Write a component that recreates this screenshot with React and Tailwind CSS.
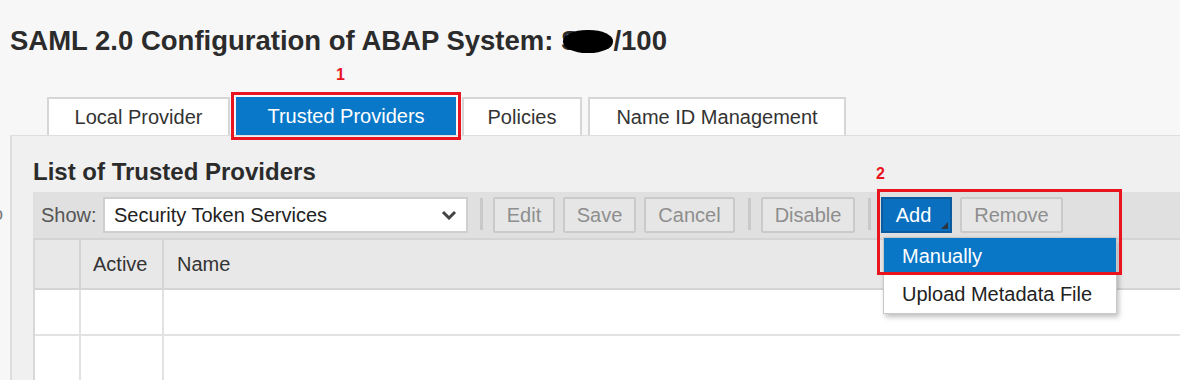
import React from "react";

const tabs = [
  { label: "Local Provider", w: "w-[183px]" },
  { label: "Trusted Providers", w: "w-[220px]", active: true },
  { label: "Policies", w: "w-[120px]" },
  { label: "Name ID Management", w: "w-[258px]" },
];

const Separator = () => <div className="w-[3px] h-[32px] bg-[#c9c9c9] mt-[1px]" />;

const ToolButton = ({ children, w }) => (
  <div
    className={`${w} h-[36px] flex items-center justify-center rounded-[2px] border-2 border-[#cacaca] bg-[#e6e6e6] text-[20px] text-[#8e8e8e]`}
  >
    {children}
  </div>
);

const App = () => {
  return (
    <div
      className="relative h-[380px] w-[1180px] overflow-hidden bg-[#f7f7f7] text-[#333]"
      style={{ fontFamily: '"Liberation Sans", Arial, sans-serif' }}
    >
      {/* clipped glyph at the left edge */}
      <span className="absolute left-[-7px] top-[201px] text-[18px] text-[#777]">o</span>

      <h1 className="pl-[10px] pt-[25px] text-[27.5px] leading-[32px] font-bold text-[#2b2b2b] whitespace-nowrap flex items-center">
        <span>SAML 2.0 Configuration of ABAP System: S</span>
        <span className="inline-block w-[50px] h-[23px] -ml-[16px] rounded-[48%] bg-black" />
        <span>/100</span>
      </h1>

      {/* tabs */}
      <div className="flex mt-[40px] ml-[47px] gap-[6px]">
        {tabs.map((t) => (
          <div
            key={t.label}
            className={`relative ${t.w} h-[38px] flex items-center justify-center text-[20px] ${
              t.active
                ? "bg-[#0a78c8] text-white outline-[3px] outline-offset-[2px] outline-[#e8141f]"
                : "bg-white text-[#333] border-2 border-b-0 border-[#d6d6d6]"
            }`}
          >
            {t.active && (
              <span className="absolute left-[100px] top-[-30px] text-[16px] leading-none font-bold text-[#e8141f]">
                1
              </span>
            )}
            {t.label}
          </div>
        ))}
      </div>

      {/* panel */}
      <div className="ml-[10px] border-l-2 border-t border-[#dedede] bg-[#f0f0f0] pl-[21px] h-[260px]">
        <h2 className="mt-[22px] text-[24px] leading-[28px] font-bold text-[#2b2b2b]">
          List of Trusted Providers
        </h2>

        {/* toolbar */}
        <div className="mt-[6px] h-[48px] bg-[#e0e0e0] border-b-2 border-[#d4d4d4] flex items-start pt-[5px] pl-[8px]">
          <span className="text-[20px] text-[#555] leading-[36px] w-[62px]">Show:</span>
          <div className="w-[365px] h-[36px] bg-white border-2 border-[#cfcfcf] flex items-center justify-between pl-[9px] pr-[9px]">
            <span className="text-[20px] text-[#222]">Security Token Services</span>
            <svg width="16" height="10" viewBox="0 0 16 10">
              <path d="M2 2 L8 8 L14 2" fill="none" stroke="#444" strokeWidth="3" />
            </svg>
          </div>
          <div className="ml-[12px] mr-[10px]">
            <Separator />
          </div>
          <div className="flex gap-[8px]">
            <ToolButton w="w-[62px]">Edit</ToolButton>
            <ToolButton w="w-[73px]">Save</ToolButton>
            <ToolButton w="w-[91px]">Cancel</ToolButton>
          </div>
          <div className="ml-[13px] mr-[10px]">
            <Separator />
          </div>
          <ToolButton w="w-[94px]">Disable</ToolButton>
          <div className="ml-[13px] mr-[10px]">
            <Separator />
          </div>
          <div className="relative">
            <div className="relative w-[71px] h-[36px] flex items-center justify-center pr-[6px] bg-[#0b6fbf] border-2 border-[#0a5c9e] text-[20px] text-white">
              Add
              <svg className="absolute right-[2px] bottom-[2px]" width="7" height="7" viewBox="0 0 7 7">
                <polygon points="7,0 7,7 0,7" fill="#2b3440" />
              </svg>
            </div>
            <span className="absolute left-[-5px] top-[-31px] text-[16px] leading-none font-bold text-[#e8141f]">
              2
            </span>
            {/* dropdown */}
            <div className="absolute left-[2px] top-[40px] w-[234px] bg-white border border-[#c8c8c8] shadow-[2px_3px_5px_rgba(0,0,0,0.25)] z-10">
              <div className="h-[36px] bg-[#0a76c6] text-white text-[20px] flex items-center pl-[18px]">
                Manually
              </div>
              <div className="h-[39px] text-[#222] text-[20px] flex items-center pl-[18px]">
                Upload Metadata File
              </div>
            </div>
            {/* annotation box */}
            <div className="absolute left-[-4px] top-[-8px] w-[245px] h-[86px] border-[3px] border-[#e8141f] z-20" />
          </div>
          <div className="ml-[8px]">
            <ToolButton w="w-[103px]">Remove</ToolButton>
          </div>
        </div>

        {/* table */}
        <div className="border-l-2 border-[#d8d8d8]">
          <div className="flex h-[50px] bg-[#e8e8e8] border-b-2 border-[#d4d4d4]">
            <div className="w-[46px] border-r-2 border-[#d4d4d4]" />
            <div className="w-[83px] border-r-2 border-[#d4d4d4] flex items-center pl-[12px] text-[20px] text-[#333]">
              Active
            </div>
            <div className="flex-1 flex items-center pl-[13px] text-[20px] text-[#333]">Name</div>
          </div>
          {[0, 1].map((r) => (
            <div key={r} className="flex h-[46px] bg-white border-b-2 border-[#e2e2e2]">
              <div className="w-[46px] border-r-2 border-[#e2e2e2]" />
              <div className="w-[83px] border-r-2 border-[#e2e2e2]" />
              <div className="flex-1" />
            </div>
          ))}
        </div>
      </div>
    </div>
  );
};

export default App;
